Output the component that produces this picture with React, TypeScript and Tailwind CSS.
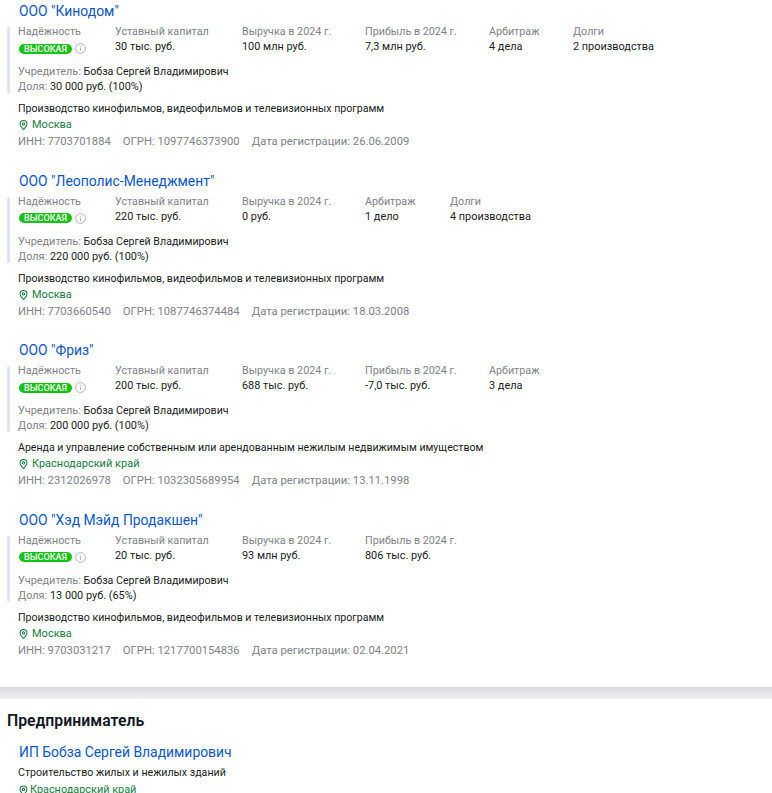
import { Fragment } from 'react'

interface Stat {
  label: string
  value: string
  width: string
}

interface Company {
  name: string
  stats: Stat[]
  founder: string
  share: string
  activity: string
  city: string
  inn: string
  ogrn: string
  registered: string
}

const CAPITAL = 'w-[127px]'
const REVENUE = 'w-[123px]'
const PROFIT = 'w-[124px]'

const companies: Company[] = [
  {
    name: 'ООО "Кинодом"',
    stats: [
      { label: 'Уставный капитал', value: '30 тыс. руб.', width: CAPITAL },
      { label: 'Выручка в 2024 г.', value: '100 млн руб.', width: REVENUE },
      { label: 'Прибыль в 2024 г.', value: '7,3 млн руб.', width: PROFIT },
      { label: 'Арбитраж', value: '4 дела', width: 'w-[84px]' },
      { label: 'Долги', value: '2 производства', width: 'w-[100px]' },
    ],
    founder: 'Бобза Сергей Владимирович',
    share: '30 000 руб. (100%)',
    activity: 'Производство кинофильмов, видеофильмов и телевизионных программ',
    city: 'Москва',
    inn: '7703701884',
    ogrn: '1097746373900',
    registered: '26.06.2009',
  },
  {
    name: 'ООО "Леополис-Менеджмент"',
    stats: [
      { label: 'Уставный капитал', value: '220 тыс. руб.', width: CAPITAL },
      { label: 'Выручка в 2024 г.', value: '0 руб.', width: REVENUE },
      { label: 'Арбитраж', value: '1 дело', width: 'w-[85px]' },
      { label: 'Долги', value: '4 производства', width: 'w-[100px]' },
    ],
    founder: 'Бобза Сергей Владимирович',
    share: '220 000 руб. (100%)',
    activity: 'Производство кинофильмов, видеофильмов и телевизионных программ',
    city: 'Москва',
    inn: '7703660540',
    ogrn: '1087746374484',
    registered: '18.03.2008',
  },
  {
    name: 'ООО "Фриз"',
    stats: [
      { label: 'Уставный капитал', value: '200 тыс. руб.', width: CAPITAL },
      { label: 'Выручка в 2024 г.', value: '688 тыс. руб.', width: REVENUE },
      { label: 'Прибыль в 2024 г.', value: '-7,0 тыс. руб.', width: PROFIT },
      { label: 'Арбитраж', value: '3 дела', width: 'w-[84px]' },
    ],
    founder: 'Бобза Сергей Владимирович',
    share: '200 000 руб. (100%)',
    activity: 'Аренда и управление собственным или арендованным нежилым недвижимым имуществом',
    city: 'Краснодарский край',
    inn: '2312026978',
    ogrn: '1032305689954',
    registered: '13.11.1998',
  },
  {
    name: 'ООО "Хэд Мэйд Продакшен"',
    stats: [
      { label: 'Уставный капитал', value: '20 тыс. руб.', width: CAPITAL },
      { label: 'Выручка в 2024 г.', value: '93 млн руб.', width: REVENUE },
      { label: 'Прибыль в 2024 г.', value: '806 тыс. руб.', width: PROFIT },
    ],
    founder: 'Бобза Сергей Владимирович',
    share: '13 000 руб. (65%)',
    activity: 'Производство кинофильмов, видеофильмов и телевизионных программ',
    city: 'Москва',
    inn: '9703031217',
    ogrn: '1217700154836',
    registered: '02.04.2021',
  },
]

function Pin({ className }: { className: string }) {
  return (
    <svg
      aria-hidden="true"
      viewBox="0 0 12 14"
      className={className}
      fill="none"
      stroke="#15803d"
      strokeWidth="1.4"
    >
      <path d="M6 13C3.6 10.4 1.4 8.1 1.4 5.6a4.6 4.6 0 0 1 9.2 0C10.6 8.1 8.4 10.4 6 13z" />
      <circle cx="6" cy="5.6" r="1.5" />
    </svg>
  )
}

function Info() {
  return (
    <svg aria-hidden="true" viewBox="0 0 12 12" className="h-[11px] w-[11px] shrink-0" fill="none" stroke="#9ca3af" strokeWidth="0.9">
      <circle cx="6" cy="6" r="5.3" />
      <path d="M6 5.2v3.4M6 3.2v1" />
    </svg>
  )
}

function CompanyCard({ company }: { company: Company }) {
  return (
    <div className="h-[169.5px] pl-[18px]">
      <a className="block h-[22px] pl-[1px] text-[13.9px] leading-[22px] text-[#0b57d0]">{company.name}</a>
      {/* Lilac rule runs along the stats and founder block only */}
      <div className="-ml-[11px] mt-[5px] h-[66px] rounded-[2px] border-l-[3px] border-[#dfe3f5] pl-[8px]">
        <div className="flex h-[37px] items-start text-[10.75px]">
          <div className="w-[97px] shrink-0">
            <div className="-mt-[3px] h-[15px] leading-[15px] text-[#808388]">Надёжность</div>
            <div className="mt-[2px] flex h-[15px] items-center gap-[3px] pl-[1px]">
              <span className="flex h-[10px] w-[53px] items-center justify-center rounded-full bg-[#14c414] text-[9px] font-medium leading-[10px] text-white">
                ВЫСОКАЯ
              </span>
              <Info />
            </div>
          </div>
          {company.stats.map((stat) => (
            <div key={stat.label} className={`${stat.width} -mt-[3px] shrink-0`}>
              <div className="h-[15px] leading-[15px] text-[#808388]">{stat.label}</div>
              <div className="h-[15px] text-[10.9px] leading-[15px] text-[#1a1d24]">{stat.value}</div>
            </div>
          ))}
        </div>
        <div className="h-[15px] text-[10.65px] leading-[15px] text-[#1a1d24]">
          <span className="text-[10.9px] text-[#808388]">Учредитель: </span>
          {company.founder}
        </div>
        <div className="h-[14px] text-[10.9px] leading-[15px] text-[#1a1d24]">
          <span className="text-[#808388]">Доля: </span>
          {company.share}
        </div>
      </div>
      <div className="mt-[8px] h-[16px] text-[10.6px] leading-[16px] text-[#1a1d24]">{company.activity}</div>
      <div className="flex h-[16px] items-center gap-[4px] leading-[16px] text-[#15803d]">
        <Pin className="ml-[1px] h-[12px] w-[9px] shrink-0" />
        <span>{company.city}</span>
      </div>
      <div className="mt-[1px] flex h-[16px] gap-[12px] text-[11.25px] leading-[16px] text-[#808388]">
        <span>ИНН: {company.inn}</span>
        <span>ОГРН: {company.ogrn}</span>
        <span>Дата регистрации: {company.registered}</span>
      </div>
    </div>
  )
}

export default function App() {
  return (
    <div className="h-[793px] w-[772px] overflow-hidden bg-white font-['Roboto',sans-serif] text-[11px]">
      {companies.map((company) => (
        <Fragment key={company.name}>
          <CompanyCard company={company} />
        </Fragment>
      ))}
      <div className="mt-[9px] h-[12px] bg-gradient-to-b from-[#d5d8da] to-[#f1f2f3]" />
      <h2 className="pl-[7px] pt-[12px] text-[15.8px] font-semibold leading-[20px] text-[#14171f]">Предприниматель</h2>
      <div className="pl-[18px] pt-[11px]">
        <a className="block h-[20px] pl-[1px] text-[13.9px] leading-[20px] text-[#0b57d0]">ИП Бобза Сергей Владимирович</a>
        <div className="mt-[2px] h-[18px] text-[10.65px] leading-[17px] text-[#1a1d24]">Строительство жилых и нежилых зданий</div>
        <div className="flex h-[16px] items-center gap-[2px] text-[10.9px] leading-[16px] text-[#15803d]">
          <Pin className="ml-[1px] h-[11px] w-[9px] shrink-0" />
          <span>Краснодарский край</span>
        </div>
      </div>
    </div>
  )
}
